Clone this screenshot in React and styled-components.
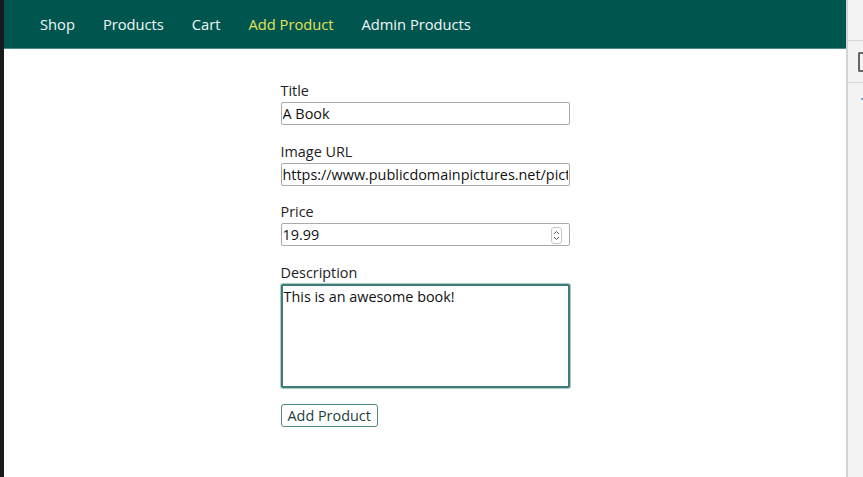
import React from "react";
import styled, { createGlobalStyle } from "styled-components";

const GlobalStyle = createGlobalStyle`
  html, body {
    margin: 0;
    padding: 0;
    height: 100%;
    overflow: hidden;
  }
  body {
    font-family: "Open Sans", "Noto Sans", sans-serif;
    background: #ffffff;
  }
  #root {
    height: 100%;
  }
`;

const Screen = styled.div`
  display: flex;
  height: 477px;
  width: 863px;
`;

const EdgeStrip = styled.div`
  width: 4px;
  background: #17191b;
`;

const Page = styled.div`
  flex: 1;
  display: flex;
  flex-direction: column;
  background: #fff;
`;

const Header = styled.header`
  height: 48px;
  background: #00564f;
  border-bottom: 1px solid #4d8a85;
  display: flex;
  align-items: center;
  padding-left: 36px;
`;

const Nav = styled.nav`
  display: flex;
  gap: 28px;
`;

const NavLink = styled.a`
  color: ${(p) => (p.active ? "#e4e25a" : "#f2f6f5")};
  text-decoration: none;
  font-size: 14.7px;
  line-height: 20px;
`;

const Form = styled.form`
  width: 289px;
  margin: 32px auto 0;
  display: flex;
  flex-direction: column;
`;

const Field = styled.div`
  display: flex;
  flex-direction: column;
  margin-bottom: 16.6px;
`;

const Label = styled.label`
  font-size: 14.4px;
  line-height: 20px;
  color: #222;
  margin-bottom: 1px;
`;

const Input = styled.input`
  box-sizing: border-box;
  width: 100%;
  height: 23px;
  padding: 0 1px;
  font-family: "Open Sans", "Noto Sans", sans-serif;
  font-size: 14.4px;
  color: #111;
  border: 1px solid #a9a9a9;
  border-radius: 2px;
  background: #fff;
  outline: none;
`;

const PriceBox = styled.div`
  position: relative;
`;

const Spinner = styled.span`
  position: absolute;
  right: 8px;
  top: 4px;
  width: 9px;
  height: 15px;
  border: 1px solid #c6c6c6;
  border-radius: 3px;
  display: flex;
  align-items: center;
  justify-content: center;
`;

const TextArea = styled.textarea`
  box-sizing: border-box;
  width: 100%;
  height: 104px;
  padding: 1px 1px;
  font-family: "Open Sans", "Noto Sans", sans-serif;
  font-size: 14.4px;
  color: #111;
  border: 2px solid #3f7c77;
  border-radius: 2px;
  box-shadow: 0 0 1px 1px #a8c7c4;
  resize: none;
  outline: none;
`;

const Button = styled.button`
  align-self: flex-start;
  height: 23px;
  padding: 0 6px;
  font-family: "Open Sans", "Noto Sans", sans-serif;
  font-size: 14.4px;
  color: #1d3f3c;
  background: #fff;
  border: 1px solid #4f8883;
  border-radius: 3px;
`;

const DevTools = styled.aside`
  width: 15px;
  border-left: 2px solid #d4d4d4;
  background: #f3f3f3;
  display: flex;
  flex-direction: column;
`;

const DevRow = styled.div`
  height: ${(p) => p.h}px;
  border-bottom: 1px solid #d9d9d9;
  display: flex;
  align-items: center;
  padding-left: 10px;
`;

const DevBox = styled.span`
  width: 6px;
  height: 16px;
  border: 2px solid #666;
  border-right: none;
  border-radius: 2px 0 0 2px;
`;

const DevDot = styled.span`
  margin: 15px 0 0 13px;
  width: 2px;
  height: 2px;
  background: #7aa6e0;
`;

export default function App() {
  return (
    <>
      <GlobalStyle />
      <Screen>
        <EdgeStrip />
        <Page>
          <Header>
            <Nav>
              <NavLink href="#">Shop</NavLink>
              <NavLink href="#">Products</NavLink>
              <NavLink href="#">Cart</NavLink>
              <NavLink href="#" active>
                Add Product
              </NavLink>
              <NavLink href="#">Admin Products</NavLink>
            </Nav>
          </Header>
          <Form onSubmit={(e) => e.preventDefault()}>
            <Field>
              <Label>Title</Label>
              <Input type="text" defaultValue="A Book" />
            </Field>
            <Field>
              <Label>Image URL</Label>
              <Input
                type="text"
                defaultValue="https://www.publicdomainpictures.net/pictures/book.jpg"
              />
            </Field>
            <Field>
              <Label>Price</Label>
              <PriceBox>
                <Input type="text" defaultValue="19.99" />
                <Spinner>
                  <svg width="7" height="11" viewBox="0 0 7 11">
                    <path
                      d="M1 4 L3.5 1.5 L6 4 M1 7 L3.5 9.5 L6 7"
                      fill="none"
                      stroke="#555"
                      strokeWidth="1"
                    />
                  </svg>
                </Spinner>
              </PriceBox>
            </Field>
            <Field>
              <Label>Description</Label>
              <TextArea defaultValue="This is an awesome book!" />
            </Field>
            <Button type="submit">Add Product</Button>
          </Form>
        </Page>
        <DevTools>
          <DevRow h={40} />
          <DevRow h={41}>
            <DevBox />
          </DevRow>
          <DevDot />
        </DevTools>
      </Screen>
    </>
  );
}
